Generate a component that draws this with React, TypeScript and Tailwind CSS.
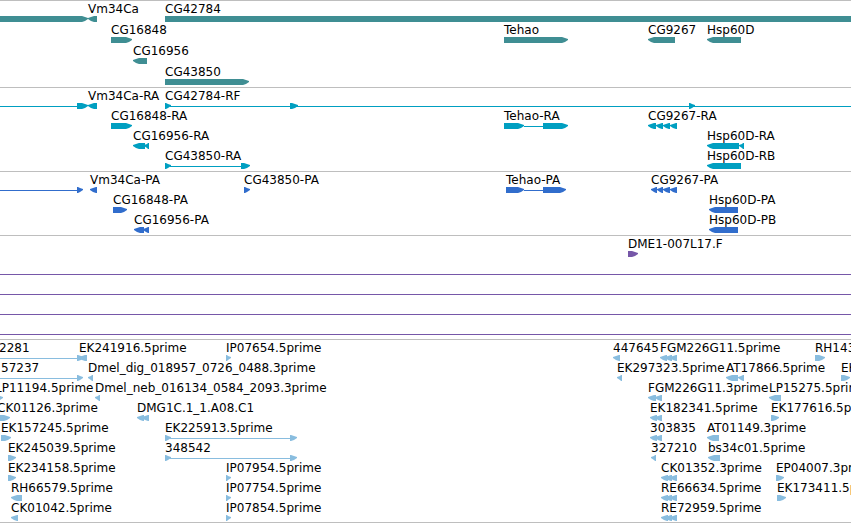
import React from "react";
import clsx from "clsx";

// [start, end, direction]; "line" is an intron, end = null runs off the view
type Segment = [number, number | null, "right" | "left" | "line"];

type Feature = {
  label?: string;
  at: number;
  segments: Segment[];
};

type Track = {
  name: string;
  color: string;
  spaced?: boolean;
  rows: Feature[][];
};

const HEAD = 6;

const f = (label: string, at: number, ...segments: Segment[]): Feature => ({
  label,
  at,
  segments,
});

const fullLine: Feature = { at: 0, segments: [[0, null, "line"]] };

const tracks: Track[] = [
  {
    name: "Genes",
    color: "text-[#3f8e93]",
    spaced: true,
    rows: [
      [
        { at: 0, segments: [[-20, 88, "right"]] },
        f("Vm34Ca", 88, [88, 97, "left"]),
        f("CG42784", 165, [165, null, "right"]),
      ],
      [
        f("CG16848", 111, [111, 132, "right"]),
        f("Tehao", 504, [504, 568, "right"]),
        f("CG9267", 648, [648, 675, "left"]),
        f("Hsp60D", 707, [707, 741, "left"]),
      ],
      [f("CG16956", 133, [133, 147, "left"])],
      [f("CG43850", 165, [165, 249, "right"])],
    ],
  },
  {
    name: "Transcripts",
    color: "text-[#009fc1]",
    rows: [
      [
        { at: 0, segments: [[0, 77, "line"], [77, 88, "right"]] },
        f("Vm34Ca-RA", 88, [88, 97, "left"]),
        f(
          "CG42784-RF",
          165,
          [165, 171, "right"],
          [170, null, "line"],
          [290, 298, "right"],
          [689, 695, "right"]
        ),
      ],
      [
        f("CG16848-RA", 111, [111, 132, "right"]),
        f("Tehao-RA", 504, [504, 524, "right"], [524, 543, "line"], [543, 568, "right"]),
        f("CG9267-RA", 648, [648, 656, "left"], [656, 663, "left"], [663, 670, "left"], [670, 677, "left"]),
      ],
      [
        f("CG16956-RA", 133, [133, 145, "left"], [144, 149, "left"]),
        f("Hsp60D-RA", 707, [707, 739, "left"], [739, 744, "left"]),
      ],
      [
        f("CG43850-RA", 165, [165, 171, "right"], [170, 241, "line"], [241, 250, "right"]),
        f("Hsp60D-RB", 707, [707, 741, "left"]),
      ],
    ],
  },
  {
    name: "Coding sequences",
    color: "text-[#316dcc]",
    rows: [
      [
        { at: 0, segments: [[0, 77, "line"], [77, 83, "right"]] },
        f("Vm34Ca-PA", 90, [90, 97, "left"]),
        f("CG43850-PA", 244, [244, 250, "right"]),
        f("Tehao-PA", 506, [506, 524, "right"], [524, 543, "line"], [543, 566, "right"]),
        f("CG9267-PA", 651, [651, 657, "left"], [657, 663, "left"], [663, 670, "left"], [670, 677, "left"]),
      ],
      [
        f("CG16848-PA", 113, [113, 127, "right"]),
        f("Hsp60D-PA", 709, [709, 738, "left"]),
      ],
      [
        f("CG16956-PA", 134, [134, 144, "left"], [143, 149, "left"]),
        f("Hsp60D-PB", 709, [709, 738, "left"]),
      ],
    ],
  },
  {
    name: "Insertions",
    color: "text-[#7657a8]",
    rows: [
      [f("DME1-007L17.F", 628, [628, 638, "right"])],
      [fullLine],
      [fullLine],
      [fullLine],
      [fullLine],
    ],
  },
  {
    name: "ESTs",
    color: "text-[#89bddf]",
    rows: [
      [
        f("2281", -1, [0, 77, "line"], [77, 84, "right"]),
        f("EK241916.5prime", 79, [79, 87, "left"]),
        f("IP07654.5prime", 226, [226, 231, "right"]),
        f("447645", 613, [613, 620, "left"]),
        f("FGM226G11.5prime", 660, [660, 667, "left"], [665, 672, "left"], [670, 677, "left"]),
        f("RH143", 815, [815, 825, "right"]),
      ],
      [
        f("57237", 1, [0, 77, "line"], [77, 83, "right"]),
        f("Dmel_dig_018957_0726_0488.3prime", 88, [88, 93, "left"]),
        f("EK297323.5prime", 617, [617, 622, "left"]),
        f("AT17866.5prime", 726, [726, 738, "left"], [738, 744, "left"]),
        f("EK", 841, [841, 850, "right"]),
      ],
      [
        f("LP11194.5prime", -5, [-3, 3, "right"]),
        f("Dmel_neb_016134_0584_2093.3prime", 95, [95, 100, "left"]),
        f("FGM226G11.3prime", 648, [648, 656, "left"], [655, 662, "left"]),
        f("LP15275.5prime", 769, [769, 781, "left"]),
      ],
      [
        f("CK01126.3prime", -3, [-3, 10, "right"]),
        f("DMG1C.1_1.A08.C1", 137, [137, 144, "left"], [142, 149, "left"]),
        f("EK182341.5prime", 650, [650, 657, "left"], [655, 662, "left"]),
        f("EK177616.5prime", 771, [771, 779, "right"]),
      ],
      [
        f("EK157245.5prime", 1, [1, 11, "right"]),
        f("EK225913.5prime", 165, [165, 171, "right"], [170, 290, "line"], [290, 297, "right"]),
        f("303835", 650, [650, 657, "left"], [655, 662, "left"]),
        f("AT01149.3prime", 707, [707, 719, "left"]),
      ],
      [
        f("EK245039.5prime", 8, [8, 16, "right"]),
        f("348542", 165, [165, 171, "right"], [170, 290, "line"], [290, 297, "right"]),
        f("327210", 651, [651, 656, "left"]),
        f("bs34c01.5prime", 708, [708, 720, "left"]),
      ],
      [
        f("EK234158.5prime", 8, [8, 16, "right"]),
        f("IP07954.5prime", 226, [226, 231, "right"]),
        f("CK01352.3prime", 661, [661, 668, "left"], [665, 672, "left"], [670, 677, "left"]),
        f("EP04007.3prime", 776, [776, 784, "right"]),
      ],
      [
        f("RH66579.5prime", 11, [11, 22, "left"]),
        f("IP07754.5prime", 226, [226, 231, "right"]),
        f("RE66634.5prime", 661, [661, 668, "left"], [665, 672, "left"], [670, 677, "left"]),
        f("EK173411.5prime", 777, [777, 786, "right"]),
      ],
      [
        f("CK01042.5prime", 11, [11, 18, "left"]),
        f("IP07854.5prime", 226, [226, 231, "right"]),
        f("RE72959.5prime", 661, [661, 668, "left"], [665, 672, "left"], [670, 677, "left"]),
      ],
    ],
  },
];

const Glyph = ({ segment }: { segment: Segment }) => {
  const [start, end, kind] = segment;

  if (kind === "line") {
    return end === null ? (
      <svg x={start} width="100%" height="6">
        <rect y="3" width="100%" height="1" />
      </svg>
    ) : (
      <rect x={start} y="3" width={end - start} height="1" />
    );
  }

  // Runs past the right edge, so no head is drawn
  if (end === null) {
    return (
      <svg x={start} width="100%" height="6">
        <rect width="100%" height="6" />
      </svg>
    );
  }

  // Blunt head: one full column stays behind it on the short segments
  const head = Math.min(HEAD, end - start - 1);
  const [tail, tip, sign] = kind === "right" ? [start, end, -1] : [end, start, 1];
  const neck = tip + sign * head;
  const cheek = tip + sign * 3;
  const points = `${tail},0 ${neck},0 ${cheek},1 ${tip},2 ${tip},3 ${cheek},5 ${neck},6 ${tail},6`;

  return <polygon points={points} />;
};

const Row = ({ features, color }: { features: Feature[]; color: string }) => {
  return (
    <div className="relative w-full overflow-hidden">
      {/* Labels */}
      <div className="h-[14px]">
        {features.map((feature) =>
          feature.label ? (
            <span
              key={feature.label}
              className="absolute top-0 whitespace-nowrap"
              style={{ left: feature.at }}
            >
              {feature.label}
            </span>
          ) : null
        )}
      </div>

      {/* Glyphs */}
      <svg className={clsx("block h-[6px] w-full", color)} fill="currentColor">
        {features.map((feature, i) => (
          <g key={i}>
            {feature.segments.map((segment, j) => (
              <Glyph key={j} segment={segment} />
            ))}
          </g>
        ))}
      </svg>
    </div>
  );
};

const App = () => {
  return (
    <main className="w-full overflow-hidden border-b border-[#bebebe] bg-white font-['DejaVu_Sans',sans-serif] text-[12px] leading-[14px] text-black">
      {tracks.map((track) => (
        <section
          key={track.name}
          aria-label={track.name}
          className={clsx(
            "flex flex-col border-t border-[#bebebe] pt-px pb-[2px] last:pb-px",
            track.spaced && "gap-px"
          )}
        >
          {track.rows.map((features, i) => (
            <Row key={i} features={features} color={track.color} />
          ))}
        </section>
      ))}
    </main>
  );
};

export default App;
